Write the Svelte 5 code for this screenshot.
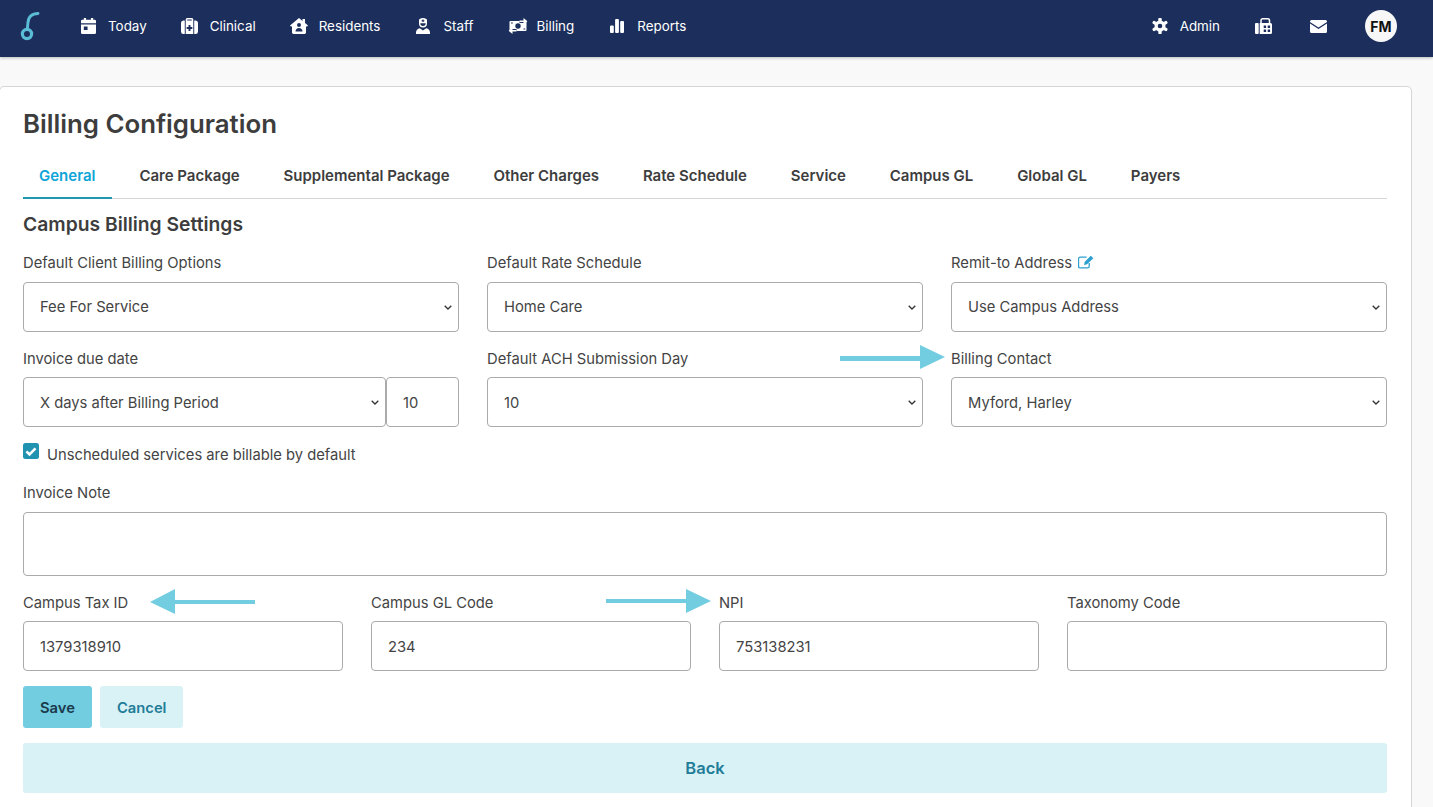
<script>
  const left = [
    { label: 'Today', icon: 'today' },
    { label: 'Clinical', icon: 'clinical' },
    { label: 'Residents', icon: 'residents' },
    { label: 'Staff', icon: 'staff' },
    { label: 'Billing', icon: 'billing' },
    { label: 'Reports', icon: 'reports' }
  ];
  const tabs = ['General', 'Care Package', 'Supplemental Package', 'Other Charges', 'Rate Schedule', 'Service', 'Campus GL', 'Global GL', 'Payers'];
  const bottom = [
    { label: 'Campus Tax ID', value: '1379318910' },
    { label: 'Campus GL Code', value: '234' },
    { label: 'NPI', value: '753138231' },
    { label: 'Taxonomy Code', value: '' }
  ];
</script>

{#snippet chevron()}
  <svg class="chev" width="8" height="5" viewBox="0 0 8 5"><path d="M.7.7L4 4 7.300.7" fill="none" stroke="#333" stroke-width="1.300"/></svg>
{/snippet}

{#snippet select(value, cls = '')}
  <div class="sel {cls}">
    <select><option>{value}</option></select>
    {@render chevron()}
  </div>
{/snippet}

{#snippet navicon(name)}
  <span class="box">
  {#if name === 'today'}
    <svg class="ic" width="15" height="16" viewBox="0 0 16 18" preserveAspectRatio="none"><path fill="#fff" d="M3 0h2.400v2h5.200V0H13v2h1.500A1.500 1.500 0 0 1 16 3.500V6H0V3.500A1.500 1.500 0 0 1 1.500 2H3zM0 7.200h16v9.300a1.500 1.500 0 0 1-1.500 1.500h-13A1.500 1.500 0 0 1 0 16.500zM3 9.500v4h4v-4z" fill-rule="evenodd"/></svg>
  {:else if name === 'clinical'}
    <svg class="ic" width="17" height="16" viewBox="0 0 18 16" preserveAspectRatio="none"><path fill="#fff" fill-rule="evenodd" d="M2.500 2.500H4V16H2.500A2.500 2.500 0 0 1 0 13.500v-8.500a2.500 2.500 0 0 1 2.500-2.500zM14 2.500h1.500A2.500 2.500 0 0 1 18 5v8.500a2.500 2.500 0 0 1-2.500 2.500H14zM5 16V1.500A1.500 1.500 0 0 1 6.500 0h5A1.500 1.500 0 0 1 13 1.500V16zM6.600 2.500h4.800V1.500H6.600zM8 7v2H6v2h2v2h2v-2h2V9h-2V7z"/></svg>
  {:else if name === 'residents'}
    <svg class="ic" width="18" height="16" viewBox="0 0 18 16"><path fill="#fff" fill-rule="evenodd" d="M9 0l3.500 2.900V1H15v4l3 2.500-.9 1.100H16v6A1.400 1.400 0 0 1 14.600 16H3.400A1.400 1.400 0 0 1 2 14.600v-6H.9L0 7.500zM9 5a2 2 0 1 0 0 4 2 2 0 0 0 0-4zM5.500 13.500h7c0-2-1.500-3.400-3.500-3.400s-3.500 1.400-3.500 3.400z"/></svg>
  {:else if name === 'staff'}
    <svg class="ic" width="14" height="16" viewBox="0 0 14 16"><path fill="#fff" fill-rule="evenodd" d="M7 0c2.300 0 4 1 4 2.200v3.300a4 4 0 0 1-8 0V2.200C3 1 4.700 0 7 0zM6.400 1.500v.8h-.8v1h.8v.8h1.200v-.8h.8v-1h-.8v-.8zM4.300 5.200a2.700 2.700 0 0 0 5.400 0zM3.800 10.200L7 12.600l3.200-2.400c2.300.3 3.800 2.200 3.800 4.400V16H0v-1.400c0-2.200 1.500-4.100 3.800-4.400z"/></svg>
  {:else if name === 'billing'}
    <svg class="ic billing-ic" width="19" height="16" viewBox="0 0 19 16">
      <rect x="1" y="3" width="17" height="10" rx="1" fill="#fff"/>
      <circle cx="9.500" cy="8" r="2.700" fill="#1c2f5c"/>
      <path d="M2.500 5h1.800M15 11h1.800" stroke="#1c2f5c" stroke-width="1.200"/>
      <path d="M11 3.200h6M8 12.800H2" stroke="#1c2f5c" stroke-width="3.400"/>
      <path d="M11 3.200h6M8 12.800H2" stroke="#fff" stroke-width="1.500"/>
      <path fill="#fff" d="M15 0l4 3.200-4 3.200zM4 9.600L0 12.800 4 16z"/>
    </svg>
  {:else if name === 'reports'}
    <svg class="ic" width="14" height="14" viewBox="0 0 14 14"><path fill="#fff" d="M0 7.500A1 1 0 0 1 1 6.500h1.800a1 1 0 0 1 1 1v5.500a1 1 0 0 1-1 1H1a1 1 0 0 1-1-1zM5.100 1A1 1 0 0 1 6.100 0h1.800a1 1 0 0 1 1 1v12a1 1 0 0 1-1 1H6.100a1 1 0 0 1-1-1zM10.200 3a1 1 0 0 1 1-1H13a1 1 0 0 1 1 1V13a1 1 0 0 1-1 1h-1.800a1 1 0 0 1-1-1z"/></svg>
  {/if}
  </span>
{/snippet}

<div class="page">
  <nav class="nav">
    <svg class="logo" width="24" height="32" viewBox="0 0 24 32">
      <path d="M20 3.500C14 3.500 10.300 7 10 12.500L9.300 19" fill="none" stroke="#5bbcd6" stroke-width="2.900" stroke-linecap="round"/>
      <circle cx="9" cy="24" r="4.600" fill="none" stroke="#5bbcd6" stroke-width="3.200"/>
    </svg>
    <div class="links">
      {#each left as l}
        <a class="link">{@render navicon(l.icon)}<span>{l.label}</span></a>
      {/each}
    </div>
    <div class="right">
      <a class="link admin">
        <span class="box"><svg class="ic" width="16" height="16" viewBox="0 0 16 16">
          <g stroke="#fff" stroke-width="3.400" stroke-linecap="round">
            <path d="M8 1.300v13.400"/>
            <path d="M2.200 4.650l11.600 6.700"/>
            <path d="M2.200 11.350l11.600-6.700"/>
          </g>
          <circle cx="8" cy="8" r="5.500" fill="#fff"/>
          <circle cx="8" cy="8" r="2.300" fill="#1c2f5c"/>
        </svg></span>
        <span>Admin</span>
      </a>
      <svg class="ic fax" width="17" height="16" viewBox="0 0 17 16">
        <path fill="#fff" fill-rule="evenodd" d="M0 6A1 1 0 0 1 1 5h1.700a1 1 0 0 1 1 1v9a1 1 0 0 1-1 1H1a1 1 0 0 1-1-1zM4.700 16V5H15.500A1.500 1.500 0 0 1 17 6.500v8A1.500 1.500 0 0 1 15.500 16zM8.700 7.500v2.400h2.400V7.500zM12.700 7.500v2.400h2.400V7.500zM8.700 11.500v2.400h2.400v-2.400zM12.700 11.500v2.400h2.400v-2.400z"/>
        <path fill="none" stroke="#fff" stroke-width="1.500" d="M6 5.500V2.500Q6 .8 7.700.8H12.500Q14.500.8 14.500 2.500V5.500"/>
      </svg>
      <svg class="ic mail" width="17" height="13" viewBox="0 0 17 13"><path fill="#fff" d="M1.500 0h14A1.500 1.500 0 0 1 17 1.500v.4L8.500 7.600 0 1.900v-.4A1.500 1.500 0 0 1 1.500 0zM0 3.500l8.500 5.500L17 3.500V11.400A1.600 1.600 0 0 1 15.400 13H1.600A1.600 1.600 0 0 1 0 11.400z"/></svg>
      <div class="avatar">FM</div>
    </div>
  </nav>

  <main class="card">
    <h1>Billing Configuration</h1>
    <ul class="tabs">
      {#each tabs as t, i}
        <li class:active={i === 0}>{t}</li>
      {/each}
    </ul>
    <h2>Campus Billing Settings</h2>

    <div class="three">
      <div class="field">
        <label>Default Client Billing Options</label>
        {@render select('Fee For Service')}
      </div>
      <div class="field">
        <label>Default Rate Schedule</label>
        {@render select('Home Care')}
      </div>
      <div class="field">
        <label>Remit-to Address
          <svg class="edit" width="16" height="14" viewBox="0 0 15 13"><path fill="none" stroke="#2a9fd0" stroke-width="1.200" d="M10.500 7.500v3a1.500 1.500 0 0 1-1.500 1.500H2a1.500 1.500 0 0 1-1.500-1.500v-7A1.500 1.500 0 0 1 2 2h6"/><path fill="#2a9fd0" d="M12 .6L14.400 3 8.500 8.700l-2.800.5.500-2.800z"/></svg>
        </label>
        {@render select('Use Campus Address')}
      </div>
      <div class="field low">
        <label>Invoice due date</label>
        <div class="combo">
          {@render select('X days after Billing Period', 'grow')}
          <input class="input days" value="10" />
        </div>
      </div>
      <div class="field low">
        <label>Default ACH Submission Day</label>
        {@render select('10')}
      </div>
      <div class="field low">
        <label>Billing Contact</label>
        {@render select('Myford, Harley')}
      </div>
    </div>

    <div class="check">
      <svg width="16" height="16" viewBox="0 0 16 16"><rect width="16" height="16" rx="2.500" fill="#1f93b0"/><path d="M3.400 8.400l3.100 3 6-6" fill="none" stroke="#fff" stroke-width="2.600"/></svg>
      <span>Unscheduled services are billable by default</span>
    </div>

    <div class="field note">
      <label>Invoice Note</label>
      <textarea class="input area"></textarea>
    </div>

    <div class="four">
      {#each bottom as b}
        <div class="field low">
          <label>{b.label}</label>
          <input class="input" value={b.value} />
        </div>
      {/each}
    </div>

    <div class="actions">
      <button class="save">Save</button>
      <button class="cancel">Cancel</button>
    </div>
    <button class="back">Back</button>
  </main>

  <svg class="arrows" width="1433" height="807" viewBox="0 0 1433 807">
    <g fill="#72cde0">
      <path d="M840 356h80v-11l25 12-25 12v-8h-80z"/>
      <path d="M255 600h-80v-11l-25 13 25 12v-10h80z"/>
      <path d="M606 599h80v-10l25 12-25 12v-10h-80z"/>
    </g>
  </svg>
</div>

<style>
  :global(body) { margin: 0; background: #f9f9f9; }
  .page {
    position: relative;
    height: 807px;
    overflow: hidden;
    font-family: Inter, "Liberation Sans", sans-serif;
    font-size: 14.75px;
    color: #444;
    background: #f9f9f9;
  }
  .nav {
    height: 57px;
    box-sizing: border-box;
    background: #1c2f5c;
    box-shadow: 0 1px 3px rgba(0,0,0,.25);
    display: flex;
    align-items: center;
    padding: 0 36px 5px 18px;
    color: #fff;
    font-size: 13.4px;
  }
  .logo { flex: none; margin-right: 36px; }
  .links { display: flex; align-items: center; }
  .link { display: flex; align-items: center; gap: 10px; color: #fff; }
  .links .link { margin-right: 33px; }
  .box { width: 20px; display: flex; justify-content: center; flex: none; }
  .ic { display: block; flex: none; }
  .billing-ic { transform: translateX(1.5px); }
  .right { margin-left: auto; display: flex; align-items: center; }
  .admin { margin-right: 35px; }
  .fax { margin-right: 38px; }
  .mail { margin-right: 38px; }
  .avatar {
    width: 32px; height: 32px; border-radius: 50%;
    background: #f7f7f7; color: #111;
    display: flex; align-items: center; justify-content: center;
    font-weight: 700; font-size: 14px;
  }
  .card {
    position: relative;
    margin: 29px 0 0 -1px;
    width: 1413px;
    box-sizing: border-box;
    background: #fff;
    border: 1px solid #d6d6d6;
    border-radius: 5px;
    padding: 22px 24px 0 23px;
    height: 760px;
  }
  h1 { margin: 0; font-size: 25.8px; line-height: 30px; font-weight: 600; color: #3d3d3d; }
  .tabs {
    list-style: none; margin: 19px 0 0; padding: 0;
    display: flex; gap: 11.875px;
    border-bottom: 1px solid #d6d6d6;
  }
  .tabs li {
    padding: 0 16px;
    height: 41px; line-height: 35px; box-sizing: border-box;
    font-weight: 600; font-size: 15px; color: #3d3d3d;
    margin-bottom: -1px;
  }
  .tabs li.active { color: #0ea5d8; border-bottom: 2px solid #2098b5; }
  h2 { margin: 13px 0 0; font-size: 19.3px; line-height: 25px; font-weight: 600; color: #3d3d3d; }
  .three { display: grid; grid-template-columns: repeat(3, 436px); column-gap: 28px; row-gap: 17px; margin-top: 16px; }
  .four { display: grid; grid-template-columns: repeat(4, 320px); column-gap: 28px; margin-top: 17px; }
  .four label { margin-bottom: 8px; }
  .field { display: flex; flex-direction: column; }
  label { display: block; line-height: 20px; height: 20px; margin-bottom: 9px; color: #444; }
  .three .field:nth-child(n+4) label { margin-bottom: 8px; }
  .edit { vertical-align: -1px; margin-left: 2px; }
  .sel { position: relative; }
  .sel.grow { flex: 1; }
  select, .input {
    display: block;
    width: 100%;
    box-sizing: border-box;
    height: 50px;
    border: 1px solid #aaa;
    border-radius: 4px;
    background: #fff;
    font: inherit;
    color: #444;
    padding: 0 16px;
    outline: none;
    margin: 0;
  }
  .low select, .low .input { padding-top: 2px; }
  select { appearance: none; -webkit-appearance: none; }
  .chev { position: absolute; right: 7px; top: 23px; pointer-events: none; }
  .combo { display: flex; }
  .days { width: 73px; flex: none; }
  .check { display: flex; gap: 8px; margin-top: 16px; height: 20px; }
  .check svg { flex: none; }
  .check span { line-height: 20px; margin-top: 2px; }
  .note { margin-top: 20px; }
  .area { height: 64px; resize: none; display: block; }
  .actions { display: flex; gap: 8px; margin-top: 15px; }
  button {
    border: 0; border-radius: 3px; font: inherit; font-weight: 600; height: 42px; padding: 0 17px;
  }
  .save, .cancel { padding-top: 2px; }
  .save { background: #72cde0; color: #1a3a4c; }
  .cancel { background: #d8f2f6; color: #1f7d98; }
  .back { display: block; width: 100%; height: 50px; margin-top: 15px; background: #d8f2f6; color: #1f7d98; font-size: 16.5px; }
  .arrows { position: absolute; left: 0; top: 0; pointer-events: none; }
</style>
